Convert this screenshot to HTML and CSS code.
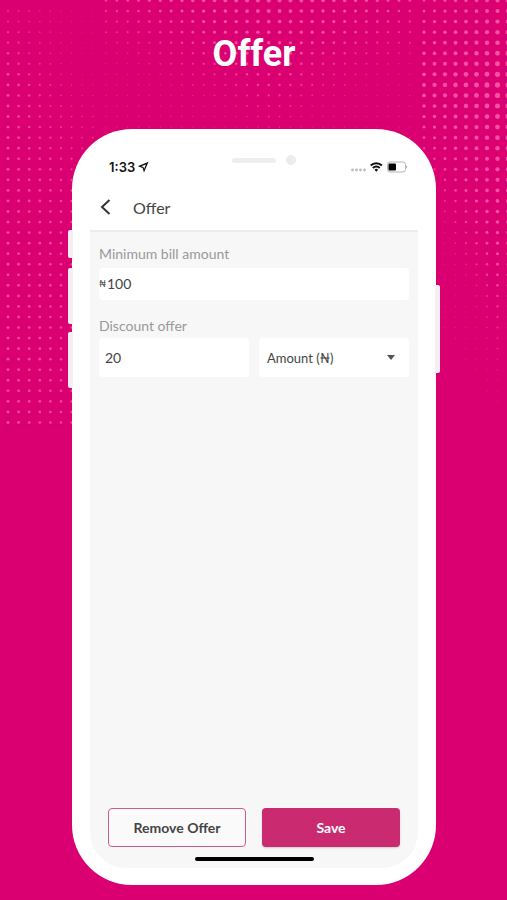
FILE: index.html
```html
<!DOCTYPE html>
<html lang="en">
<head>
<meta charset="utf-8">
<meta name="viewport" content="width=device-width, initial-scale=1">
<title>Offer</title>
<link rel="stylesheet" href="styles.css">
</head>
<body>
<svg class="halftone" aria-hidden="true"></svg>
<main class="poster">
  <h1 class="poster-title">Offer</h1>
  <div class="phone">
    <span class="key key-mute"></span>
    <span class="key key-up"></span>
    <span class="key key-down"></span>
    <span class="key key-power"></span>
    <div class="notch"><span class="speaker"></span><span class="camera"></span></div>
    <div class="screen">
      <div class="status">
        <span class="clock">1:33</span>
        <svg class="location" width="12" height="12" viewBox="0 0 12 12" aria-hidden="true"><path fill="#111" fill-rule="evenodd" d="M11.500.800 7 11.500 5.600 6.900.800 5.300zM8.900 3.400 4.300 5.300l2.200.800.600 2z"/></svg>
        <svg class="signal" width="56" height="12" viewBox="0 0 56 12" aria-hidden="true">
          <g fill="#bbb"><circle cx="1.500" cy="9" r="1.400"/><circle cx="5.500" cy="9" r="1.400"/><circle cx="9.500" cy="9" r="1.400"/><circle cx="13.500" cy="9" r="1.400"/></g>
          <g fill="none" stroke="#111" stroke-width="2"><path d="M19.700 4.500a8 8 0 0 1 11.200 0"/><path d="M21.900 7a4.800 4.800 0 0 1 6.800 0"/></g>
          <path fill="#111" d="M23.500 8.700a2.600 2.600 0 0 1 3.600 0l-1.800 2z"/>
          <rect x="36.500" y="1" width="18" height="10" rx="2.500" fill="#fff" stroke="#b5b5b5"/>
          <rect x="37.500" y="2.500" width="7.500" height="7" rx="1" fill="#000"/>
          <path d="M55 4.500c1.300.500 1.300 2.500 0 3z" fill="#aaa"/>
        </svg>
      </div>
      <header class="appbar">
        <button class="back" type="button" aria-label="Back"><svg width="12" height="16" viewBox="0 0 12 16"><path d="M10.500 1 3 8l7.500 7" fill="none" stroke="#333" stroke-width="2"/></svg></button>
        <h2>Offer</h2>
      </header>
      <form class="form">
        <label for="minimum">Minimum bill amount</label>
        <div class="money">
          <span class="naira">₦</span><input id="minimum" type="text" value="100">
        </div>
        <label class="second" for="discount">Discount offer</label>
        <div class="pair">
          <input class="box" id="discount" type="text" value="20">
          <div class="choice">
            <select class="box" aria-label="Discount type"><option>Amount (₦)</option></select>
            <svg class="caret" width="8" height="5" viewBox="0 0 8 5" aria-hidden="true"><path d="M0 0h8L4 5z" fill="#555"/></svg>
          </div>
        </div>
        <div class="actions">
          <button class="remove" type="button">Remove Offer</button>
          <button class="save" type="submit">Save</button>
        </div>
      </form>
      <div class="home"></div>
    </div>
  </div>
</main>
<script src="dots.js"></script>
</body>
</html>
```
FILE: styles.css
```css
* { box-sizing: border-box; }
body {
  margin: 0;
  background: #db0072;
  color: #444;
  font-family: Lato, "Open Sans", "DejaVu Sans", sans-serif;
}
h1, h2 { margin: 0; }
input, select, button { font: inherit; color: inherit; border: 0; margin: 0; }
.halftone {
  position: absolute;
  top: 0;
  left: 0;
  width: 100%;
  height: 430px;
  fill: #ff69b4;
}
.poster {
  position: relative;
  display: flex;
  flex-direction: column;
  min-height: 100vh;
  padding: 32px 71px 15px 72px;
}
.poster-title {
  color: #fff;
  font: 700 36px/44px Roboto, sans-serif;
  text-align: center;
}
.phone {
  position: relative;
  display: flex;
  flex: 1;
  margin-top: 53px;
  padding: 20px 18px 17px;
  border-radius: 60px;
  background: #fff;
}
.key {
  position: absolute;
  left: -4px;
  width: 5px;
  background: #f5eef2;
  border-radius: 2px 0 0 2px;
}
.key-mute { top: 101px; height: 28px; }
.key-up { top: 139px; height: 56px; }
.key-down { top: 203px; height: 56px; }
.key-power { top: 156px; left: auto; right: -4px; height: 88px; border-radius: 0 2px 2px 0; }
.notch {
  position: absolute;
  top: 26px;
  left: 160px;
  display: flex;
  align-items: center;
  gap: 10px;
}
.speaker { width: 44px; height: 5px; border-radius: 3px; background: #eee; }
.camera { width: 10px; height: 10px; border-radius: 50%; background: #ececec; }
.screen {
  display: flex;
  flex: 1;
  flex-direction: column;
  min-width: 0;
  border-radius: 0 0 36px 36px;
  background: #f7f7f7;
}
.status {
  display: flex;
  align-items: center;
  height: 36px;
  padding: 0 11px 0 19px;
  background: #fff;
}
.clock { color: #111; font: 600 13px/16px Inter, sans-serif; }
.location { margin-left: 2px; }
.signal { margin-left: auto; }
.appbar {
  display: flex;
  align-items: center;
  gap: 20px;
  height: 47px;
  padding: 0 0 1px 9px;
  border-bottom: 2px solid #ececec;
  background: #fff;
}
.appbar h2 { font-size: 16px; font-weight: 400; }
.back { display: flex; padding: 0; background: none; width: 14px; }
.form {
  display: flex;
  flex: 1;
  flex-direction: column;
  padding: 13px 9px 10px;
}
label { color: #999; font-size: 14px; line-height: 18px; }
.second { margin-top: 17px; }
.money {
  display: flex;
  align-items: center;
  height: 32px;
  margin-top: 5px;
  padding-bottom: 2px;
  border-radius: 4px;
  background: #fff;
}
.naira { width: 8px; font-size: 9px; }
.money input { flex: 1; min-width: 0; padding: 0; background: none; font-size: 14px; }
.pair { display: grid; grid-template-columns: 1fr 1fr; gap: 10px; margin-top: 3px; }
.box {
  width: 100%;
  height: 39px;
  padding: 0 6px;
  border-radius: 4px;
  background: #fff;
  font-size: 14px;
}
.choice { position: relative; }
.choice .box { appearance: none; padding: 0 8px; font-size: 13px; }
.caret { position: absolute; top: 17px; right: 14px; pointer-events: none; }
.actions {
  display: grid;
  grid-template-columns: 1fr 1fr;
  gap: 16px;
  margin-top: auto;
  padding: 0 9px;
}
.actions button { height: 39px; padding: 0; border-radius: 4px; font-size: 14px; font-weight: 700; }
.actions .remove { border: 1px solid #d35a8c; background: #fafafa; }
.save { background: #c92a70; color: #fff; box-shadow: 0 1px 2px #ccc; }
.home { align-self: center; width: 119px; height: 4px; margin-bottom: 7px; border-radius: 2px; background: #000; }
```
FILE: dots.js
```js
// Halftone backdrop: three panels of dots whose radius follows a soft field.
const clamp = (v, lo, hi) => Math.max(lo, Math.min(hi, v));

const panels = [
  { x: 8, step: 10.6, cols: 9, size: (x, y) => {
    const near = 0.9 + clamp(y / 160, 0, 0.5);
    const inner = 0.55 + clamp((y - 60) / 200, 0, 0.7);
    const t = clamp((x - 8) / 74, 0, 1);
    return near * (1 - t) + inner * t;
  } },
  { x: 106, step: 10.85, cols: 29, size: (x, y) => {
    const top = 2.1 - Math.abs(x - 270) / 190;
    return Math.max(clamp(top - y / 100, 0, 2), y < 15 && x < 130 ? 0 : 0.7);
  } },
  { x: 424, step: 10.5, cols: 9, size: (x, y) => {
    const peak = 2.7 - (500 - x) * 0.009;
    const fade = y > 85 ? (y - 85) / (135 + (x - 424) * 1.5) : (85 - y) / 200;
    const r = peak - fade * 1.7;
    return y > 300 + (x - 424) * 1.5 ? 0 : clamp(r, 0.6, 2.6);
  } }
];

let dots = "";
for (const panel of panels) {
  for (let c = 0; c < panel.cols; c++) {
    for (let r = 0; r < 41; r++) {
      const x = panel.x + c * panel.step;
      const y = 0.5 + r * 10.55;
      if (panel.x === 8 && r === 0) continue;
      const size = panel.size(x, y);
      if (size > 0) dots += `<circle cx="${x}" cy="${y}" r="${size}" opacity="${clamp(size * 0.5, 0.3, 0.75)}"/>`;
    }
  }
}
document.querySelector(".halftone").innerHTML = dots;
```
